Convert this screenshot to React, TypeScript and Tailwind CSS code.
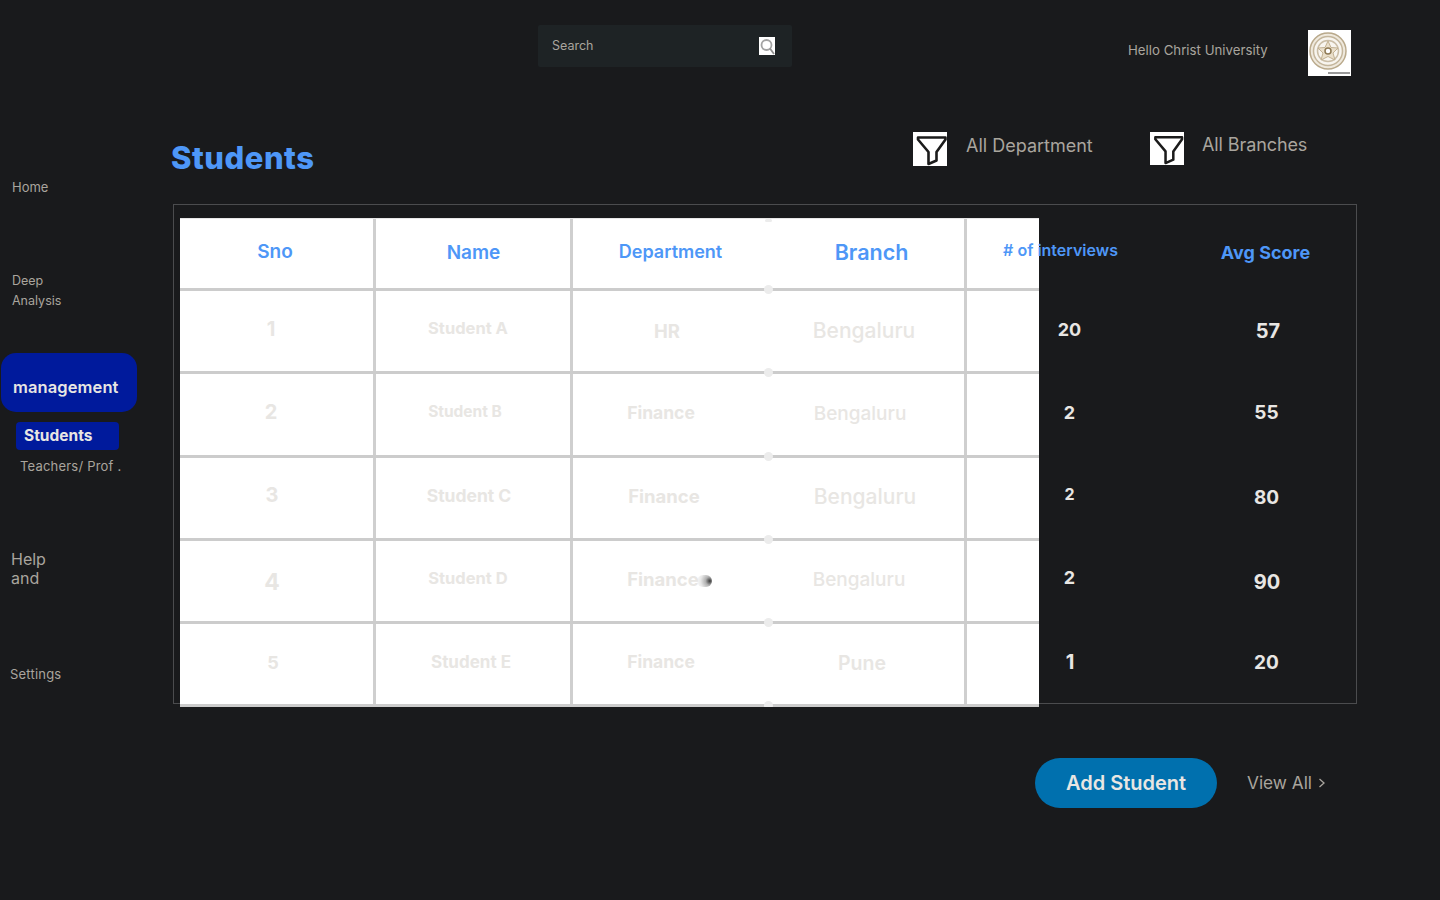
import React from "react";

const Funnel = ({ h = "h-[34px]" }: { h?: string }) => (
  <svg viewBox="0 0 34 34" className={`w-[34px] ${h} shrink-0 bg-white`}>
    <path d="M5 5.5H32.5V7.5L23.5 20V28.5L15.5 32V20L5 7.5Z" fill="none" stroke="#1b1b1b" strokeWidth="2.6" strokeLinejoin="round" />
  </svg>
);

const Seal = () => (
  <svg viewBox="0 0 43 46" className="w-[43px] h-[46px] shrink-0 bg-white">
    <g className="blur-[0.5px]">
      <circle cx="20" cy="21" r="18" fill="#efe9dd" stroke="#b9a98b" strokeWidth="1.5" />
      <circle cx="20" cy="21" r="14.5" fill="#f8f5ef" stroke="#c4b69c" strokeWidth="1.5" />
      <circle cx="20" cy="21" r="10.5" fill="none" stroke="#cabda6" strokeWidth="1.5" />
      <path d="M20 11L23 17.5L30 18L25 23L27 30L20 26.5L13 30L15 23L10 18L17 17.5Z" fill="#eadfca" stroke="#c2b192" />
      <circle cx="20" cy="21" r="3" fill="#fff" stroke="#8f7a55" strokeWidth="1.5" />
      <rect x="20" y="42" width="22" height="2" fill="#9a9a9a" />
    </g>
  </svg>
);

const headers = [
  { t: "Sno", c: "pr-[7px] pb-[5px] text-[19px] font-semibold" },
  { t: "Name", c: "pr-[4px] pb-[3px] text-[19px] font-semibold" },
  { t: "Department", c: "pr-[4px] pb-[7px] text-[18px] font-semibold" },
  { t: "Branch", c: "pl-[4px] pb-[5px] text-[21.5px] font-semibold" },
  { t: "# of interviews", c: "pr-[12px] pb-[9px] text-[16px] font-semibold" },
  { t: "Avg Score", c: "pl-[4px] pb-[5px] text-[18px] font-bold" },
];

const rows = [
  [
    { t: "1", c: "pr-[15px] pb-[7px] text-[20px] font-bold" },
    { t: "Student A", c: "pr-[15px] pb-[9px] text-[16.5px] font-bold" },
    { t: "HR", c: "pr-[11px] pb-[1px] text-[18.5px] font-bold" },
    { t: "Bengaluru", c: "pr-[11px] pb-[3px] text-[21px] font-medium" },
    { t: "20", c: "pl-[6px] pb-[7px] text-[18px] font-bold" },
    { t: "57", c: "pl-[9px] pb-[3px] text-[20px] font-bold" },
  ],
  [
    { t: "2", c: "pr-[15px] pb-[8px] text-[20px] font-bold" },
    { t: "Student B", c: "pr-[21px] pb-[8px] text-[15.5px] font-bold" },
    { t: "Finance", c: "pr-[23px] pb-[6px] text-[17.5px] font-bold" },
    { t: "Bengaluru", c: "pr-[19px] pb-[4px] text-[19px] font-medium" },
    { t: "2", c: "pl-[6px] pb-[8px] text-[18px] font-bold" },
    { t: "55", c: "pl-[6px] pb-[6px] text-[19px] font-bold" },
  ],
  [
    { t: "3", c: "pr-[13px] pb-[9px] text-[20px] font-bold" },
    { t: "Student C", c: "pr-[13px] pb-[7px] text-[17.5px] font-bold" },
    { t: "Finance", c: "pr-[17px] pb-[5px] text-[18.5px] font-bold" },
    { t: "Bengaluru", c: "pr-[9px] pb-[5px] text-[21px] font-medium" },
    { t: "2", c: "pl-[6px] pb-[11px] text-[16px] font-bold" },
    { t: "80", c: "pl-[6px] pb-[3px] text-[19px] font-bold" },
  ],
  [
    { t: "4", c: "pr-[13px] pb-[1px] text-[23px] font-bold" },
    { t: "Student D", c: "pr-[15px] pb-[9px] text-[16.5px] font-bold" },
    { t: "Finance", c: "pr-[19px] pb-[5px] text-[18.5px] font-bold" },
    { t: "Bengaluru", c: "pr-[21px] pb-[5px] text-[19px] font-medium" },
    { t: "2", c: "pl-[6px] pb-[11px] text-[18px] font-bold" },
    { t: "90", c: "pl-[7px] pb-[1px] text-[20px] font-bold" },
  ],
  [
    { t: "5", c: "pr-[11px] pb-[7px] text-[18px] font-bold" },
    { t: "Student E", c: "pr-[9px] pb-[5px] text-[17px] font-bold" },
    { t: "Finance", c: "pr-[23px] pb-[7px] text-[17.5px] font-bold" },
    { t: "Pune", c: "pr-[15px] pb-[3px] text-[19.5px] font-semibold" },
    { t: "1", c: "pl-[7px] pb-[7px] text-[20px] font-bold" },
    { t: "20", c: "pl-[6px] pb-[5px] text-[19px] font-bold" },
  ],
];

const panelRows = ["h-[72px]", "h-[83px]", "h-[84px]", "h-[83px]", "h-[83px]", "h-[83px]"];
const textRows = "grid grid-cols-[repeat(6,197px)] grid-rows-[73px_83px_84px_83px_83px_83px] mt-[13px] ml-[6px] w-[1182px] relative";

export default function App() {
  return (
    <div className="flex w-[1440px] h-[900px] overflow-hidden bg-[#191a1c] text-[#a9a59e] font-['Inter','Liberation_Sans',sans-serif]">
      <aside className="w-[171px] shrink-0 flex flex-col">
        <div className="ml-[12px] mt-[179px] text-[13px] leading-[16px]">Home</div>
        <div className="ml-[12px] mt-[76px] text-[12.5px] leading-[20px]">Deep<br />Analysis</div>
        <div className="ml-[1px] mt-[42px] w-[136px] h-[59px] rounded-[15px] bg-[#001a9c] text-[#e8e6e3] text-[16.5px] font-semibold tracking-[0.1px] pl-[12px] pt-[22px] leading-[24px]">management</div>
        <div className="ml-[16px] mt-[10px] w-[103px] h-[28px] rounded-[4px] bg-[#001a9c] text-[#e8e6e3] text-[15.5px] font-bold pl-[8px] leading-[28px]">Students</div>
        <div className="ml-[20px] mt-[7px] text-[13px] tracking-[0.2px] leading-[18px] whitespace-nowrap">Teachers/ Prof .</div>
        <div className="ml-[11px] mt-[75px] text-[16px] leading-[19px]">Help<br />and</div>
        <div className="ml-[10px] mt-[78px] text-[13px] tracking-[0.2px] leading-[16px]">Settings</div>
      </aside>
      <main className="flex-1 flex flex-col">
        <header className="flex items-start h-[76px] pt-[25px]">
          <div className="ml-[367px] w-[254px] h-[42px] shrink-0 bg-[#1e2325] flex items-center justify-between pl-[14px] pr-[17px] rounded-[2px]">
            <span className="text-[12.5px]">Search</span>
            <svg viewBox="0 0 16 18" className="w-[16px] h-[18px] bg-white mt-[-1px]">
              <circle cx="7.5" cy="8" r="5" fill="none" stroke="#a3a3a3" strokeWidth="1.8" />
              <path d="M11 11.5L15 17" stroke="#8f8f8f" strokeWidth="1.8" />
            </svg>
          </div>
          <div className="ml-[336px] w-[180px] shrink-0 mt-[16px] text-[13.25px] leading-[18px] whitespace-nowrap">Hello Christ University</div>
          <div className="mt-[5px]"><Seal /></div>
        </header>
        <section className="flex items-start mt-[56px] h-[72px]">
          <h1 className="w-[742px] shrink-0 mt-[6px] text-[31px] tracking-[0.5px] leading-[40px] font-extrabold text-[#4e97f7]">Students</h1>
          <div className="w-[237px] shrink-0 flex items-center gap-[19px]">
            <Funnel />
            <span className="text-[18px] leading-[28px] mb-[6px]">All Department</span>
          </div>
          <div className="flex items-start gap-[18px]">
            <Funnel h="h-[33px]" />
            <span className="text-[18px] tracking-[-0.1px] leading-[26px]">All Branches</span>
          </div>
        </section>
        <section className="relative ml-[2px] w-[1184px] h-[500px] shrink-0 border border-[#4b4c4e]">
          <div className="absolute left-[6px] top-[13px] w-[859px] h-[489px] bg-white border-t border-t-[#e6e6e6] overflow-hidden">
            {panelRows.map((h, i) => (
              <div key={i} className={`${h} relative grid grid-cols-[196px_197px_394px_72px] border-b-[3px] border-b-[#cccccc]`}>
                <div className="border-r-[3px] border-r-[#cfcfcf]" />
                <div className="border-r-[3px] border-r-[#cfcfcf]" />
                <div className="border-r-[3px] border-r-[#cfcfcf]" />
                <div />
                <div className="absolute left-[584px] bottom-[-6px] w-[9px] h-[9px] rounded-full bg-[#ececec]" />
              </div>
            ))}
            <div className="absolute left-[585px] top-0 w-[7px] h-[3px] rounded-full bg-[#ececec]" />
            <div className="absolute left-[517px] top-[356px] w-[15px] h-[12px] rounded-full bg-[radial-gradient(circle_at_85%_50%,#3a3a3a_0%,#b0b0b0_30%,#e8e8e8_65%,#ffffff00_100%)]" />
          </div>
          <div className={textRows}>
            {headers.map((h) => (
              <div key={h.t} className={`flex items-center justify-center whitespace-nowrap text-[#4e97f7] ${h.c}`}>{h.t}</div>
            ))}
            {rows.flat().map((c, i) => (
              <div key={i} className={`flex items-center justify-center whitespace-nowrap text-[#e8e6e3] ${c.c}`}>{c.t}</div>
            ))}
          </div>
        </section>
        <section className="flex items-center mt-[54px] ml-[864px]">
          <button className="w-[182px] h-[50px] rounded-[25px] bg-[#0070ae] text-[#e8e6e3] text-[20px] font-semibold">Add Student</button>
          <span className="ml-[30px] text-[17.25px] whitespace-nowrap">View All</span>
          <svg viewBox="0 0 8 10" className="ml-[6px] w-[8px] h-[10px]">
            <path d="M1.5 1L6 5L1.5 9" fill="none" stroke="#a9a59e" strokeWidth="1.3" />
          </svg>
        </section>
      </main>
    </div>
  );
}
